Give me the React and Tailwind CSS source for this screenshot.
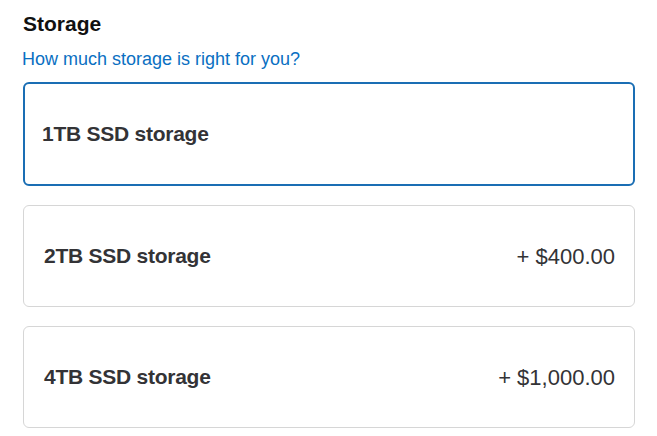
const options = [
  { id: '1tb', label: '1TB SSD storage', price: null },
  { id: '2tb', label: '2TB SSD storage', price: '+ $400.00' },
  { id: '4tb', label: '4TB SSD storage', price: '+ $1,000.00' },
];

const StorageOption = ({ label, price, selected }) => (
  <div
    className={
      selected
        ? 'flex h-[104px] items-center justify-between rounded-[6px] border-2 border-[#1a6eb4] pl-[17px] pr-[18px]'
        : 'flex h-[102px] items-center justify-between rounded-[6px] border border-[#d6d6d6] pl-[20px] pr-[19px]'
    }
  >
    <span className="text-[21px] font-bold tracking-[-0.25px] text-[#333336]">{label}</span>
    {price && <span className="text-[22px] text-[#333336]">{price}</span>}
  </div>
);

export default function App() {
  return (
    <div
      className="min-h-screen bg-white pl-[23px] pr-[22px] pt-[11px]"
      style={{ fontFamily: '"Liberation Sans", Arial, sans-serif' }}
    >
      <h2 className="text-[21px] font-bold leading-[26px] text-[#111]">Storage</h2>
      <p className="-ml-[1px] mt-[11px] text-[18px] leading-[22px] text-[#0a6fc2]">
        How much storage is right for you?
      </p>
      <div className="mt-[12px] flex flex-col gap-[19px]">
        {options.map((opt, i) => (
          <StorageOption key={opt.id} label={opt.label} price={opt.price} selected={i === 0} />
        ))}
      </div>
    </div>
  );
}
